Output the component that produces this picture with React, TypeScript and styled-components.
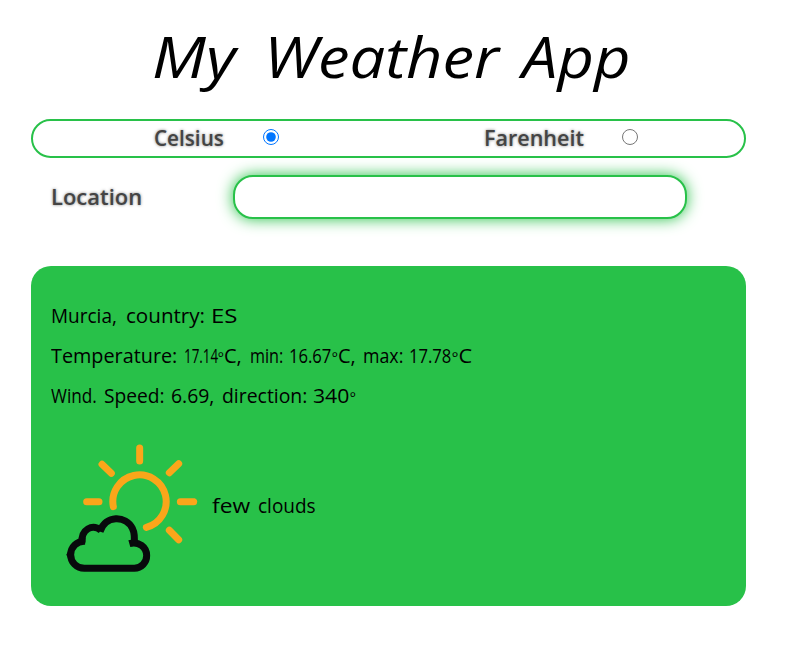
import React from 'react';
import styled, { createGlobalStyle } from 'styled-components';

const green = '#28c149';

const GlobalStyle = createGlobalStyle`
  * { box-sizing: border-box; }
  body { margin: 0; background: #fff; color: #000; font-family: 'Open Sans', 'Noto Sans', sans-serif; }
`;

const Page = styled.main`
  width: 746px;
  padding-left: 31px;
`;

const Word = styled.span<{ $w: number; $stretch?: number; $gap?: number }>`
  display: block;
  flex: none;
  width: ${p => p.$w}px;
  margin-right: ${p => p.$gap ?? 0}px;
  white-space: nowrap;
  transform: scaleX(${p => p.$stretch ?? 1});
  transform-origin: left center;
`;

const Title = styled.h1`
  display: flex;
  height: 119px;
  margin: 0;
  padding: 18px 0 0 121px;
  font-size: 56px;
  font-style: italic;
  font-weight: 400;
  line-height: 76px;
`;

const UnitBar = styled.fieldset`
  display: grid;
  grid-template-columns: 1fr 1fr;
  height: 39px;
  margin: 0;
  padding: 0;
  border: 2px solid ${green};
  border-radius: 20px;
`;

const Unit = styled.div<{ $indent: number }>`
  display: flex;
  align-items: flex-start;
  padding-left: ${p => p.$indent}px;
`;

const Label = styled.label`
  color: #444;
  font-size: 21px;
  font-weight: 600;
  line-height: 34px;
  text-shadow: 0 0 3px rgba(0, 0, 0, 0.5);
`;

const Radio = styled.input`
  width: 16px;
  height: 16px;
  margin: 8px 0 0;
`;

const Search = styled.div`
  display: flex;
  align-items: center;
  height: 44px;
  margin: 17px 0 47px;
  padding-left: 20px;
`;

const LocationInput = styled.input`
  width: 454px;
  height: 44px;
  padding: 0 16px;
  border: 2px solid ${green};
  border-radius: 20px;
  outline: none;
  background: #fff;
  box-shadow: 0 0 15px ${green};
  font: inherit;
`;

const Card = styled.section`
  height: 340px;
  padding: 30px 20px 0 19px;
  border-radius: 20px;
  background: ${green};
  font-size: 20px;
`;

const Line = styled.p`
  display: flex;
  height: 40px;
  margin: 0;
  padding-left: 1px;
  line-height: 40px;
`;

const Degree = styled.span`
  display: inline-block;
  width: 6px;
  font-size: 15px;
  line-height: 1;
`;

const Conditions = styled.div`
  display: flex;
  margin-top: 14px;
`;

const Description = styled.p`
  display: flex;
  margin: 56px 0 0 2px;
  line-height: 40px;
`;

function FewClouds() {
  return (
    <svg width="160" height="150" viewBox="0 0 480 450" fill="none" strokeWidth="21" strokeLinecap="round">
      <g stroke="#faa61a">
        <path d="M190 230A80 80 0 1 1 289 292" />
        <path d="M269 54V93M156 103L184 130M386 101L358 128M110 215H147M391 215H431M358 301L386 329" />
      </g>
      <path d="M432 205L442 215L432 225Z" fill="#faa61a" />
      <g stroke="#080a0c" strokeLinecap="butt">
        <path d="M106 334C80 332 62 352 62 374C62 397 80 415 103 415H253A37.5 37.5 0 0 0 290 377C290 351 266 333 238 341" />
        <path d="M96 338C93 298 127 280 153 301" />
        <path d="M150 305C166 254 228 256 247 295Q256 313 252 345" />
      </g>
      <path d="M54 364L49 374L54 384Z" fill="#080a0c" />
    </svg>
  );
}

export default function App() {
  return (
    <>
      <GlobalStyle />
      <Page>
        <Title>
          <Word $w={84} $stretch={1.15} $gap={28}>My</Word>
          <Word $w={233} $stretch={1.13} $gap={25}>Weather</Word>
          <Word $w={107} $stretch={1.13}>App</Word>
        </Title>
        <UnitBar>
          <Unit $indent={121}>
            <Label htmlFor="celsius"><Word $w={69} $stretch={0.985} $gap={40}>Celsius</Word></Label>
            <Radio id="celsius" type="radio" name="unit" defaultChecked />
          </Unit>
          <Unit $indent={95}>
            <Label htmlFor="farenheit"><Word $w={99} $stretch={1.025} $gap={39}>Farenheit</Word></Label>
            <Radio id="farenheit" type="radio" name="unit" />
          </Unit>
        </UnitBar>
        <Search>
          <Label htmlFor="location"><Word $w={91} $stretch={1.045} $gap={91}>Location</Word></Label>
          <LocationInput id="location" type="text" />
        </Search>
        <Card>
          <Line>
            <Word $w={66} $stretch={0.95} $gap={9}>Murcia,</Word>
            <Word $w={78} $stretch={1.03} $gap={7}>country:</Word>
            <Word $w={27} $stretch={1.2}>ES</Word>
          </Line>
          <Line>
            <Word $w={126} $stretch={0.99} $gap={7}>Temperature:</Word>
            <Word $w={34} $stretch={0.67}>17.14</Word>
            <Word $w={24} $gap={8}><Degree>º</Degree>C,</Word>
            <Word $w={32} $stretch={0.81} $gap={7}>min:</Word>
            <Word $w={43} $stretch={0.83}>16.67</Word>
            <Word $w={23} $gap={8}><Degree>º</Degree>C,</Word>
            <Word $w={39} $stretch={0.89} $gap={7}>max:</Word>
            <Word $w={43} $stretch={0.83}>17.78</Word>
            <Word $w={20} $stretch={1.08}><Degree>º</Degree>C</Word>
          </Line>
          <Line>
            <Word $w={46} $stretch={0.86} $gap={7}>Wind.</Word>
            <Word $w={60} $stretch={0.96} $gap={7}>Speed:</Word>
            <Word $w={43} $stretch={0.97} $gap={8}>6.69,</Word>
            <Word $w={85} $stretch={0.97} $gap={6}>direction:</Word>
            <Word $w={37} $stretch={1.06}>340</Word>
            <Word $w={6}><Degree>º</Degree></Word>
          </Line>
          <Conditions>
            <FewClouds />
            <Description>
              <Word $w={39} $stretch={1.14} $gap={7}>few</Word>
              <Word $w={58} $stretch={0.95}>clouds</Word>
            </Description>
          </Conditions>
        </Card>
      </Page>
    </>
  );
}
